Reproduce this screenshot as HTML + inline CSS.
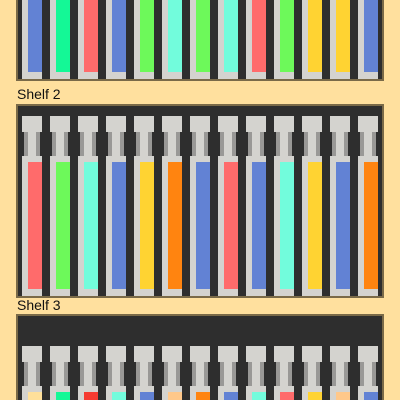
<!DOCTYPE html>
<html><head><style>
html,body{margin:0;padding:0;width:400px;height:400px;overflow:hidden;background:#ffe09e;font-family:"Liberation Sans",sans-serif;}
#wrap{position:relative;width:400px;height:400px;overflow:hidden;}
.box{position:absolute;left:16px;width:364px;border:2px solid #7a6a48;background:#2e2e2e;overflow:hidden;}
.t{position:absolute;width:20px;}
.cap{position:absolute;left:0;top:0;width:20px;height:16px;background:#d4d3cf;}
.neck{position:absolute;left:2px;top:16px;width:16px;height:24px;background:#999896;}
.neck:after{content:"";position:absolute;left:4px;top:0;width:8px;height:24px;background:#d4d3cf;}
.body{position:absolute;left:0;top:40px;width:20px;bottom:0;background:#d4d3cf;}
.c{position:absolute;left:6px;right:0;top:6px;bottom:7px;}
.lbl{position:absolute;left:17px;font-size:14px;line-height:16px;color:#111;}
</style></head><body>
<div id="wrap">
<div class="box" style="top:0;height:79px;border-top:0;" id="s1"></div>
<div class="lbl" style="top:86px">Shelf 2</div>
<div class="box" style="top:104px;height:190px;" id="s2"></div>
<div class="lbl" style="top:297px">Shelf 3</div>
<div class="box" style="top:314px;height:84px;border-bottom:0;" id="s3"></div>
</div>
<script>
var B="#6282d4",G="#14f896",R="#ff6b6b",L="#6df95a",A="#72fcdc",Y="#ffd332",O="#ff8410",P="#ffc88a",U="#ffe09a",RR="#f53a30";
var sets=[["s1",[B,G,R,B,L,A,L,A,R,L,Y,Y,B]],["s2",[R,L,A,B,Y,O,B,R,B,A,Y,B,O]],["s3",[U,G,RR,A,B,P,O,B,A,R,Y,P,B]]];
sets.forEach(function(s){
  var el=document.getElementById(s[0]);var h="";
  s[1].forEach(function(col,i){
    var x=4+28*i;
    if(s[0]=="s1"){
      h+='<div class="t" style="left:'+x+'px;top:0;bottom:0"><div class="body" style="top:0"><div class="c" style="top:0;background:'+col+'"></div></div></div>';
    } else if(s[0]=="s2"){
      h+='<div class="t" style="left:'+x+'px;top:10px;bottom:0"><div class="cap"></div><div class="neck"></div><div class="body"><div class="c" style="background:'+col+'"></div></div></div>';
    } else {
      h+='<div class="t" style="left:'+x+'px;top:30px;bottom:0"><div class="cap"></div><div class="neck"></div><div class="body"><div class="c" style="bottom:0;background:'+col+'"></div></div></div>';
    }
  });
  el.innerHTML=h;
});
</script>
</body></html>
